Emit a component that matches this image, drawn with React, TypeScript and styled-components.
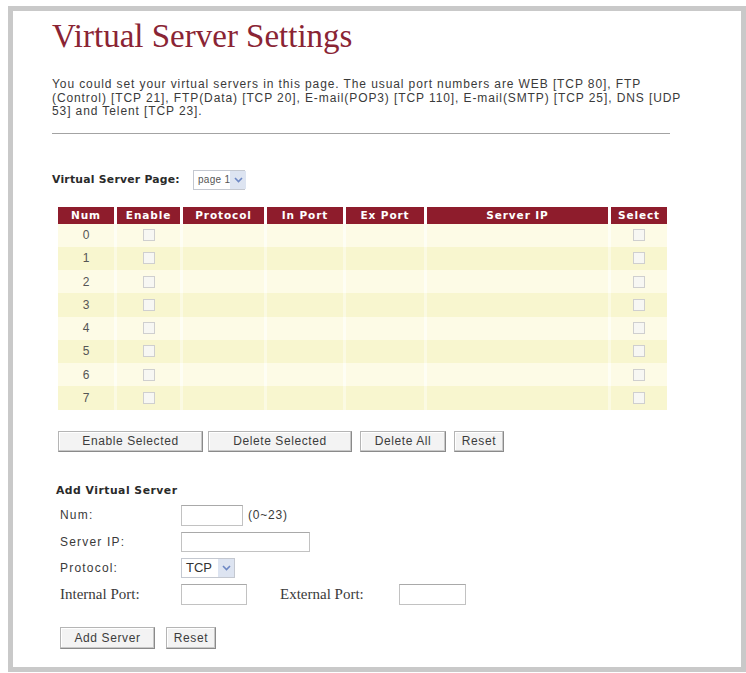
import React from "react";
import styled, { createGlobalStyle } from "styled-components";

const GlobalStyle = createGlobalStyle`
  body {
    margin: 0;
    background: #ffffff;
    font-family: "Liberation Sans", Arial, sans-serif;
  }
`;

const columns = [
  { label: "Num", width: 56 },
  { label: "Enable", width: 63 },
  { label: "Protocol", width: 81 },
  { label: "In Port", width: 76 },
  { label: "Ex Port", width: 78 },
  { label: "Server IP", width: 181 },
  { label: "Select", width: 56 },
];

const gridTemplate = columns.map((c) => `${c.width}px`).join(" ");

const introLines = [
  "You could set your virtual servers in this page. The usual port numbers are WEB [TCP 80], FTP",
  "(Control) [TCP 21], FTP(Data) [TCP 20], E-mail(POP3) [TCP 110], E-mail(SMTP) [TCP 25], DNS [UDP",
  "53] and Telent [TCP 23].",
];

const Chevron = () => (
  <svg width="9" height="6" viewBox="0 0 9 6">
    <path d="M1 1 L4.5 4.5 L8 1" fill="none" stroke="#6d88c4" strokeWidth="1.6" />
  </svg>
);

const App = () => {
  const rows = [0, 1, 2, 3, 4, 5, 6, 7];

  return (
    <>
      <GlobalStyle />
      <Frame>
        <Title>Virtual Server Settings</Title>
        <Intro>
          {introLines.map((line, i) => (
            <React.Fragment key={i}>
              {line}
              {i < introLines.length - 1 && <br />}
            </React.Fragment>
          ))}
        </Intro>
        <Rule />

        <PageRow>
          <BoldLabel>Virtual Server Page:</BoldLabel>
          <FakeSelect $width={52}>
            <PageText>page 1</PageText>
            <Arrow>
              <Chevron />
            </Arrow>
          </FakeSelect>
        </PageRow>

        <Table>
          <HeadRow>
            {columns.map((c) => (
              <HeadCell key={c.label}>{c.label}</HeadCell>
            ))}
          </HeadRow>
          {rows.map((n) => (
            <BodyRow key={n} $odd={n % 2 === 1}>
              <NumCell>{n}</NumCell>
              <Cell>
                <Check />
              </Cell>
              <Cell />
              <Cell />
              <Cell />
              <Cell />
              <Cell>
                <Check />
              </Cell>
            </BodyRow>
          ))}
        </Table>

        <ButtonBar $top={21} $left={6}>
          <Button $width={145}>Enable Selected</Button>
          <Button $width={144} $space={5}>Delete Selected</Button>
          <Button $width={86} $space={8}>Delete All</Button>
          <Button $width={50} $space={8}>Reset</Button>
        </ButtonBar>

        <SectionTitle>Add Virtual Server</SectionTitle>
        <Form>
          <FieldRow>
            <FieldLabel>Num:</FieldLabel>
            <Input $width={62} $height={21} />
            <Hint>(0~23)</Hint>
          </FieldRow>
          <FieldRow>
            <FieldLabel>Server IP:</FieldLabel>
            <Input $width={129} $height={20} />
          </FieldRow>
          <FieldRow>
            <FieldLabel>Protocol:</FieldLabel>
            <FakeSelect $width={54}>
              <ProtoText>TCP</ProtoText>
              <Arrow>
                <Chevron />
              </Arrow>
            </FakeSelect>
          </FieldRow>
          <FieldRow>
            <FieldLabel $serif>Internal Port:</FieldLabel>
            <Input $width={66} $height={21} />
            <SerifLabel>External Port:</SerifLabel>
            <Input $width={67} $height={21} />
          </FieldRow>
        </Form>

        <ButtonBar $top={22} $left={8}>
          <Button $width={95} $height={22}>Add Server</Button>
          <Button $width={50} $height={22} $space={11}>Reset</Button>
        </ButtonBar>
      </Frame>
    </>
  );
};

export default App;

const Frame = styled.div`
  box-sizing: border-box;
  width: 738px;
  height: 666px;
  margin: 6px 0 0 8px;
  padding: 7px 0 0 39px;
  border: 5px solid #c9c9c9;
  background: #ffffff;
`;

const Title = styled.h1`
  margin: 0;
  font-family: "Liberation Serif", "Times New Roman", serif;
  font-size: 33px;
  font-weight: normal;
  line-height: 37px;
  color: #8a2434;
`;

const Intro = styled.p`
  margin: 23px 0 0;
  white-space: nowrap;
  font-size: 12px;
  line-height: 13.5px;
  letter-spacing: 0.9px;
  color: #3a3a3a;
`;

const Rule = styled.div`
  width: 618px;
  height: 0;
  margin-top: 14px;
  border-top: 1px solid #a3a3a3;
`;

const PageRow = styled.div`
  display: flex;
  align-items: center;
  gap: 13px;
  margin-top: 36px;
`;

const BoldLabel = styled.span`
  font-family: "DejaVu Sans", Verdana, sans-serif;
  font-size: 10.8px;
  font-weight: bold;
  letter-spacing: 0.25px;
  color: #2a2a2a;
`;

const FakeSelect = styled.div<{ $width: number }>`
  box-sizing: border-box;
  display: flex;
  align-items: center;
  justify-content: space-between;
  width: ${({ $width }) => $width}px;
  height: 20px;
  padding-left: 4px;
  border: 1px solid #c4c8d0;
  background: #ffffff;
  white-space: nowrap;
`;

const PageText = styled.span`
  font-size: 10px;
  letter-spacing: 0.3px;
  color: #555;
`;

const ProtoText = styled.span`
  font-size: 13px;
  color: #333;
`;

const Arrow = styled.span`
  display: flex;
  align-items: center;
  justify-content: center;
  flex: none;
  width: 16px;
  height: 18px;
  background: #dde4f1;
`;

const Table = styled.div`
  margin: 17px 0 0 6px;
  width: 609px;
`;

const HeadRow = styled.div`
  display: grid;
  grid-template-columns: ${gridTemplate};
  column-gap: 3px;
  height: 17px;
`;

const HeadCell = styled.div`
  display: flex;
  align-items: center;
  justify-content: center;
  background: #8e1c2c;
  color: #ffffff;
  font-family: "DejaVu Sans", Verdana, sans-serif;
  font-size: 10.5px;
  font-weight: bold;
  letter-spacing: 0.9px;
`;

const BodyRow = styled.div<{ $odd: boolean }>`
  display: grid;
  grid-template-columns: ${gridTemplate};
  column-gap: 3px;
  height: 23.25px;
  background: ${({ $odd }) => ($odd ? "#fbfae2" : "#fefef4")};

  & > div {
    background: ${({ $odd }) => ($odd ? "#f8f6cf" : "#fdfbe6")};
  }
`;

const Cell = styled.div`
  display: flex;
  align-items: center;
  justify-content: center;
`;

const NumCell = styled(Cell)`
  font-size: 12px;
  color: #555;
`;

const Check = styled.span`
  box-sizing: border-box;
  width: 12px;
  height: 12px;
  border: 1px solid #cfcfcf;
  background: #f7f7f3;
`;

const ButtonBar = styled.div<{ $top: number; $left: number }>`
  display: flex;
  margin: ${({ $top }) => $top}px 0 0 ${({ $left }) => $left}px;
`;

const Button = styled.button<{ $width: number; $height?: number; $space?: number }>`
  box-sizing: border-box;
  flex: none;
  width: ${({ $width }) => $width}px;
  height: ${({ $height = 21 }) => $height}px;
  margin: 0 0 0 ${({ $space = 0 }) => $space}px;
  padding: 0;
  border: 1px solid #8a8a8a;
  border-top-color: #b5b5b5;
  border-left-color: #b5b5b5;
  box-shadow: inset -1px -1px 0 #c8c8c8, inset 1px 1px 0 #ffffff;
  background: #f3f3f3;
  font-family: "Liberation Sans", Arial, sans-serif;
  font-size: 12px;
  letter-spacing: 0.6px;
  color: #3c3c3c;
`;

const SectionTitle = styled.div`
  margin: 32px 0 0 4px;
  font-family: "DejaVu Sans", Verdana, sans-serif;
  font-size: 10.8px;
  font-weight: bold;
  letter-spacing: 0.5px;
  line-height: 13px;
  color: #2a2a2a;
`;

const Form = styled.div`
  display: flex;
  flex-direction: column;
  gap: 6px;
  margin: 8px 0 0 8px;
`;

const FieldRow = styled.div`
  display: flex;
  align-items: center;
`;

const FieldLabel = styled.span<{ $serif?: boolean }>`
  width: 121px;
  font-family: ${({ $serif }) =>
    $serif ? `"Liberation Serif", "Times New Roman", serif` : `"Liberation Sans", Arial, sans-serif`};
  font-size: ${({ $serif }) => ($serif ? "15px" : "12px")};
  letter-spacing: ${({ $serif }) => ($serif ? "0" : "1.2px")};
  color: #3a3a3a;
`;

const SerifLabel = styled.span`
  width: 119px;
  margin-left: 33px;
  font-family: "Liberation Serif", "Times New Roman", serif;
  font-size: 15px;
  color: #3a3a3a;
`;

const Input = styled.div<{ $width: number; $height: number }>`
  box-sizing: border-box;
  flex: none;
  width: ${({ $width }) => $width}px;
  height: ${({ $height }) => $height}px;
  border: 1px solid #c2c2c2;
  border-top-color: #a9a9a9;
  background: #ffffff;
`;

const Hint = styled.span`
  margin-left: 5px;
  font-size: 12px;
  letter-spacing: 0.8px;
  color: #3a3a3a;
`;
